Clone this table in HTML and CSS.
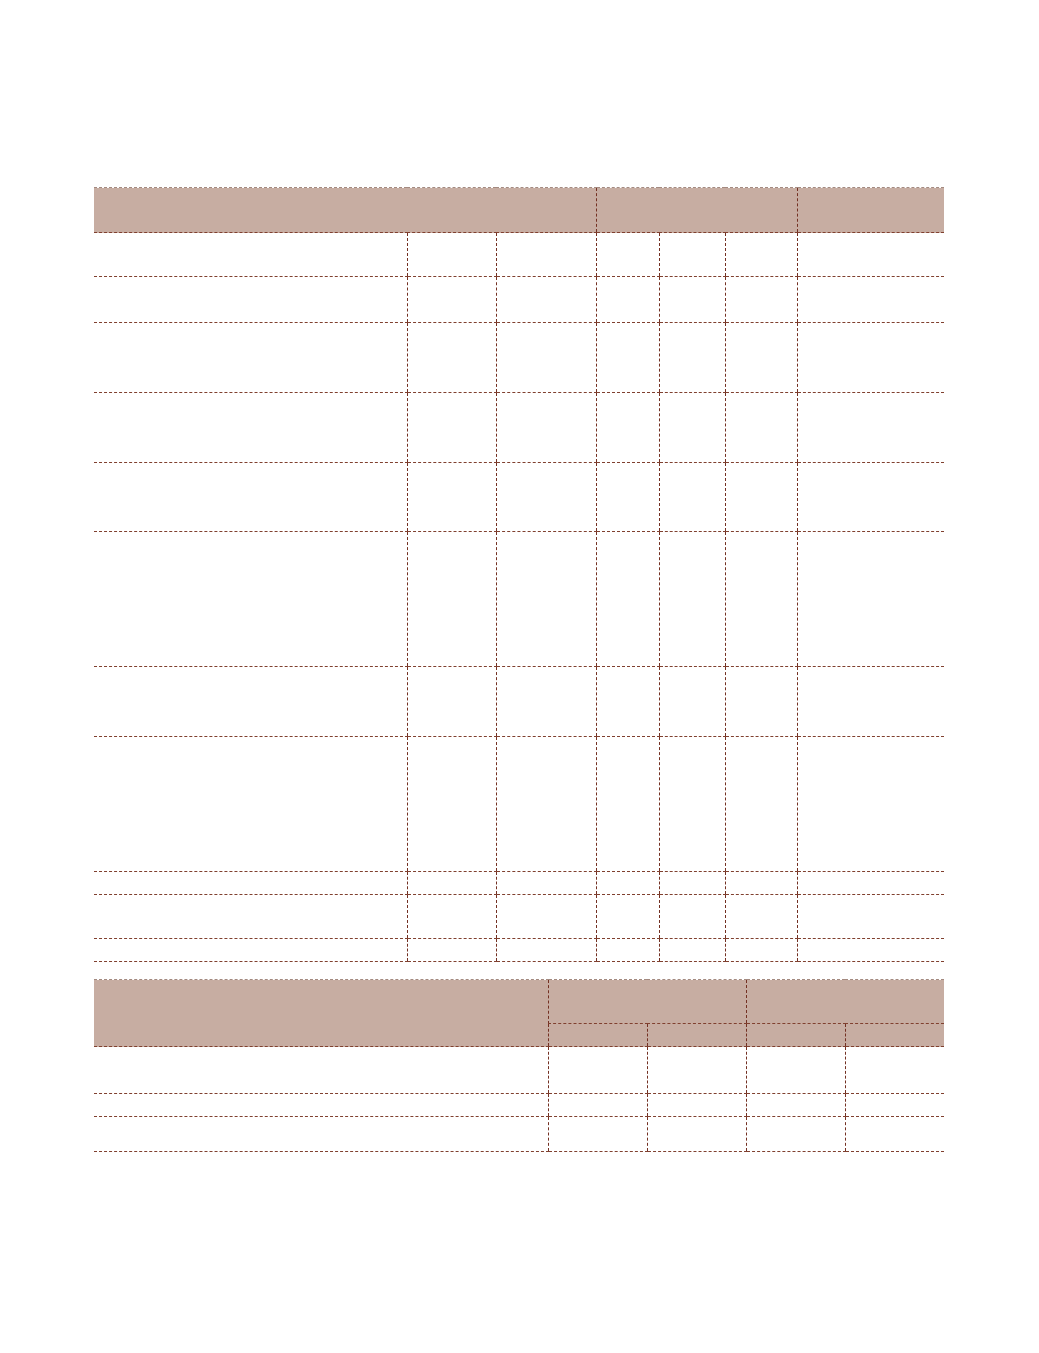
FILE: index.html
```html
<!DOCTYPE html>
<html lang="en">
<head>
<meta charset="utf-8">
<title>Tables</title>
<link rel="stylesheet" href="styles.css">
</head>
<body>
<div class="page">
  <table class="grid t1">
    <colgroup>
      <col class="w313"><col class="w89"><col class="w100"><col class="w63"><col class="w66"><col class="w72"><col class="w147">
    </colgroup>
    <thead>
      <tr class="h45">
        <th colspan="3" class="first"></th>
        <th colspan="3"></th>
        <th></th>
      </tr>
    </thead>
    <tbody>
      <tr class="h44"><td class="first"></td><td></td><td></td><td></td><td></td><td></td><td></td></tr>
      <tr class="h46"><td class="first"></td><td></td><td></td><td></td><td></td><td></td><td></td></tr>
      <tr class="h70"><td class="first"></td><td></td><td></td><td></td><td></td><td></td><td></td></tr>
      <tr class="h70"><td class="first"></td><td></td><td></td><td></td><td></td><td></td><td></td></tr>
      <tr class="h69"><td class="first"></td><td></td><td></td><td></td><td></td><td></td><td></td></tr>
      <tr class="h135"><td class="first"></td><td></td><td></td><td></td><td></td><td></td><td></td></tr>
      <tr class="h70"><td class="first"></td><td></td><td></td><td></td><td></td><td></td><td></td></tr>
      <tr class="h135"><td class="first"></td><td></td><td></td><td></td><td></td><td></td><td></td></tr>
      <tr class="h23"><td class="first"></td><td></td><td></td><td></td><td></td><td></td><td></td></tr>
      <tr class="h44"><td class="first"></td><td></td><td></td><td></td><td></td><td></td><td></td></tr>
      <tr class="h23"><td class="first"></td><td></td><td></td><td></td><td></td><td></td><td></td></tr>
    </tbody>
  </table>

  <table class="grid t2">
    <colgroup>
      <col class="w454"><col class="w99"><col class="w99"><col class="w99"><col class="w99">
    </colgroup>
    <thead>
      <tr class="h44">
        <th rowspan="2" class="first"></th>
        <th colspan="2"></th>
        <th colspan="2"></th>
      </tr>
      <tr class="h23">
        <th></th><th></th><th></th><th></th>
      </tr>
    </thead>
    <tbody>
      <tr class="h47"><td class="first"></td><td></td><td></td><td></td><td></td></tr>
      <tr class="h23"><td class="first"></td><td></td><td></td><td></td><td></td></tr>
      <tr class="h35"><td class="first"></td><td></td><td></td><td></td><td></td></tr>
    </tbody>
  </table>
</div>
</body>
</html>
```

FILE: styles.css
```css
html, body {
  margin: 0;
  padding: 0;
  background: #ffffff;
  font-family: "Liberation Sans", Arial, sans-serif;
}

.page {
  padding: 187px 0 0 94px;
  display: flex;
  flex-direction: column;
  gap: 17px;
}

.grid {
  width: 850px;
  table-layout: fixed;
  border-collapse: collapse;
  border-spacing: 0;
}

.grid th,
.grid td {
  padding: 0;
  border-top: 1px dashed #80402f;
  border-bottom: 1px dashed #80402f;
  border-left: 1px dashed #733022;
  border-right: none;
}

.grid th {
  background: #c7ada2;
  border-top-color: #a48a80;
}

.grid .first {
  border-left: none;
}

.w313 { width: 313px; }
.w89 { width: 89px; }
.w100 { width: 100px; }
.w63 { width: 63px; }
.w66 { width: 66px; }
.w72 { width: 72px; }
.w147 { width: 147px; }
.w454 { width: 454px; }
.w99 { width: 99px; }

.h23 { height: 23px; }
.h35 { height: 35px; }
.h44 { height: 44px; }
.h45 { height: 45px; }
.h46 { height: 46px; }
.h47 { height: 47px; }
.h69 { height: 69px; }
.h70 { height: 70px; }
.h135 { height: 135px; }
```
